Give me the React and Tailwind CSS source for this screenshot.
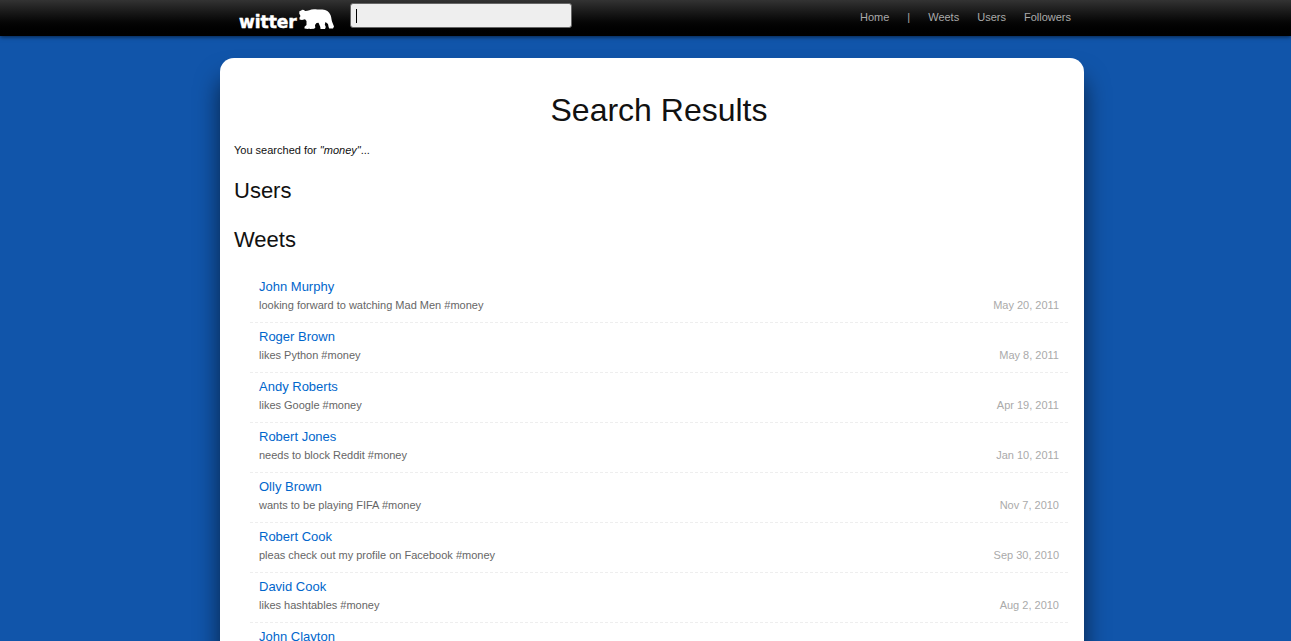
const weets = [
  { name: 'John Murphy', text: 'looking forward to watching Mad Men #money', date: 'May 20, 2011' },
  { name: 'Roger Brown', text: 'likes Python #money', date: 'May 8, 2011' },
  { name: 'Andy Roberts', text: 'likes Google #money', date: 'Apr 19, 2011' },
  { name: 'Robert Jones', text: 'needs to block Reddit #money', date: 'Jan 10, 2011' },
  { name: 'Olly Brown', text: 'wants to be playing FIFA #money', date: 'Nov 7, 2010' },
  { name: 'Robert Cook', text: 'pleas check out my profile on Facebook #money', date: 'Sep 30, 2010' },
  { name: 'David Cook', text: 'likes hashtables #money', date: 'Aug 2, 2010' },
  { name: 'John Clayton', text: '', date: '' },
];

function Logo() {
  return (
    <a href="#home" aria-label="witter" className="block">
      <svg width="98" height="26" viewBox="0 0 98 26" fill="#fff">
        <text x="1" y="23" fontFamily="'DejaVu Sans', sans-serif" fontWeight="700" fontSize="17" stroke="#fff" strokeWidth="0.5" strokeLinejoin="round">witter</text>
        <path d="M61.200 8.500 L61.500 6 L63 5.800 L64 4.800 L66 5 L67 6 C70 6.200 72 4.300 76 4.200 C79 4.200 81 4.800 84 4.500 C88 4.300 91 6.500 92.500 10 C93.500 12.500 93.500 15 94.200 17 L96 21.500 L95 23.500 L91.200 23.600 L90.600 22 L90 19 L87.500 17 L86.800 19.500 L87.800 22 L87 24 L82.500 24 L82.300 22 L80.500 17.800 L78.500 18 L77 20 L77.300 22.800 L76 23.800 L72 24 L71 23.600 L70 24 L66.500 23.500 L66.500 21.700 L68.500 20 L68.500 16 L67 14.300 L64 15 L61.500 14.500 L61.500 12.500 L62.500 11 Z" />
      </svg>
    </a>
  );
}

function Weet({ name, text, date }) {
  return (
    <li className="border-b border-dashed border-[#eee] px-[9px] pt-[5px] pb-2">
      <a href="#user" className="block text-[13px] leading-[18px] text-[#0066cc]">{name}</a>
      <div className="flex justify-between leading-[18px]">
        <p className="text-[#666]">{text}</p>
        <time className="text-[#aaa]">{date}</time>
      </div>
    </li>
  );
}

export default function App() {
  return (
    <div className="h-screen overflow-hidden bg-[#1155aa] font-['Liberation_Sans',Arial,sans-serif] text-[11px] text-[#111]">
      <header className="h-9 bg-linear-to-b from-[#333] to-black shadow-[0_1px_4px_rgba(0,0,0,0.6)]">
        <div className="mx-auto flex h-full max-w-[851px] items-center pl-[18px]">
          <Logo />
          <div className="relative mb-[5px] ml-[14px]">
            <input
              type="text"
              aria-label="Search"
              autoFocus
              className="block h-[25px] w-[222px] rounded-[3px] border border-[#666] bg-[#eee] px-[5px] text-[13px] text-black caret-transparent outline-none"
            />
            <span aria-hidden="true" className="pointer-events-none absolute top-[6px] left-[6px] h-[14px] w-px bg-black" />
          </div>
          <nav className="ml-auto flex gap-[18px] pb-[2px] leading-4 text-[#aaa]">
            <a href="#home">Home</a>
            <span>|</span>
            <a href="#weets">Weets</a>
            <a href="#users">Users</a>
            <a href="#followers">Followers</a>
          </nav>
        </div>
      </header>
      <div className="mx-auto max-w-[851px] pt-[22px]">
        <main className="-mr-[13px] rounded-t-[14px] bg-white pt-8 pb-10 pl-[14px] shadow-[0_20px_25px_rgba(0,0,0,0.6)]">
          <h1 className="text-center text-[32px] leading-10">Search Results</h1>
          <p className="mt-3 leading-4">
            You searched for <em>"money"</em>...
          </p>
          <h2 className="mt-[17px] text-[22px] leading-8">Users</h2>
          <h2 className="mt-[17px] text-[22px] leading-8">Weets</h2>
          <ul className="mx-4 mt-[17px]">
            {weets.map((weet) => (
              <Weet key={weet.name} {...weet} />
            ))}
          </ul>
        </main>
      </div>
    </div>
  );
}
